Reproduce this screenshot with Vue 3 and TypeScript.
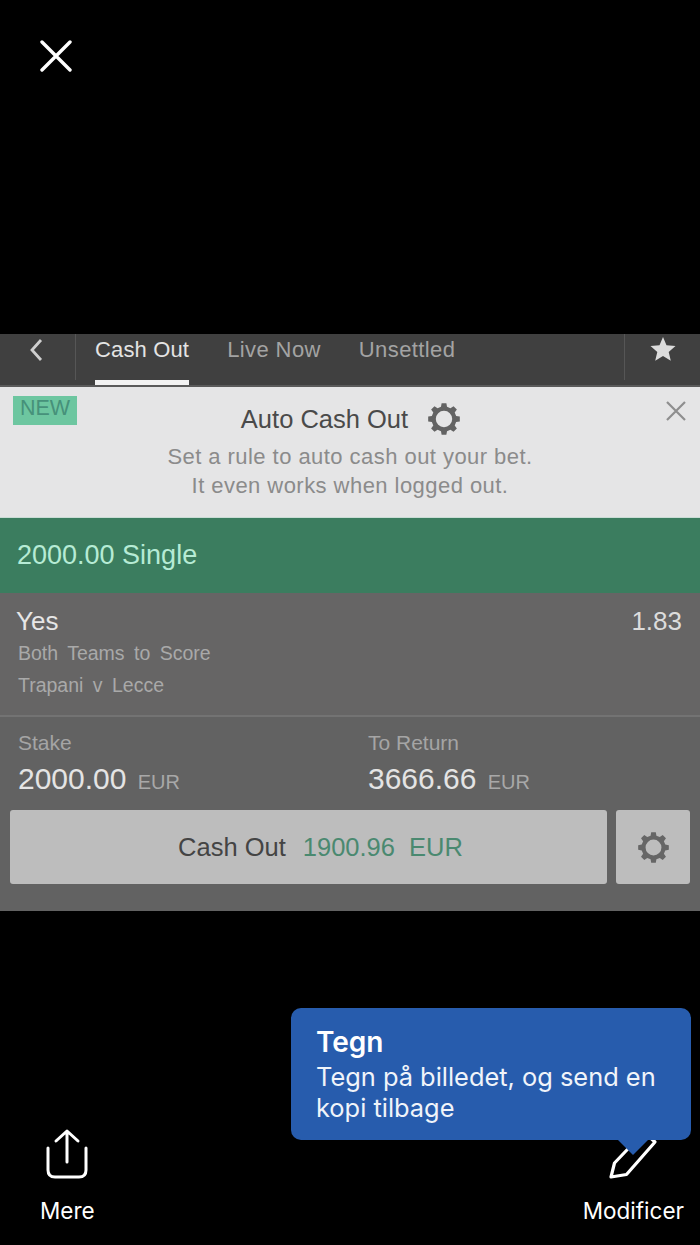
<template>
  <div class="viewer">
    <header class="top">
      <svg class="close" width="32" height="32" viewBox="0 0 32 32" fill="none">
        <path d="M2 2 L30 30 M30 2 L2 30" stroke="#fff" stroke-width="3.4" stroke-linecap="round" />
      </svg>
    </header>

    <section class="shot">
      <nav class="tabs">
        <div class="back">
          <svg width="16" height="24" viewBox="0 0 16 24" fill="none">
            <path d="M13 2 L4 12 L13 22" stroke="#cfcfcf" stroke-width="2.8" />
          </svg>
        </div>
        <div class="tab-list">
          <span
            v-for="tab in tabs"
            :key="tab.label"
            :class="['tab', { active: tab.active }]"
          >{{ tab.label }}</span>
        </div>
        <div class="fav">
          <svg width="26" height="26" viewBox="0 0 26 26">
            <path d="M13 1 L16.5 9.2 L25.5 10 L18.7 15.9 L20.8 24.7 L13 20 L5.2 24.7 L7.3 15.9 L.5 10 L9.5 9.2 Z" fill="#dcdcdc" />
          </svg>
        </div>
      </nav>

      <div class="banner">
        <span class="new">NEW</span>
        <svg class="dismiss" width="22" height="22" viewBox="0 0 22 22" fill="none">
          <path d="M2 2 L20 20 M20 2 L2 20" stroke="#8e8e8e" stroke-width="2.2" />
        </svg>
        <div class="banner-title">
          Auto Cash Out
          <svg class="gear" width="32" height="32" viewBox="0 0 32 32">
            <path :d="gearPath" fill="#636363" fill-rule="evenodd" />
          </svg>
        </div>
        <p class="banner-text">Set a rule to auto cash out your bet.<br />It even works when logged out.</p>
      </div>

      <div class="bet-head">2000.00 Single</div>

      <div class="selection">
        <div class="selection-info">
          <div class="pick">Yes</div>
          <div class="sub">Both Teams to Score</div>
          <div class="sub">Trapani v Lecce</div>
        </div>
        <div class="odds">1.83</div>
      </div>

      <div class="stakes">
        <div class="amounts">
          <div v-for="item in amounts" :key="item.label" class="amount">
            <div class="amount-label">{{ item.label }}</div>
            <div class="amount-value">{{ item.value }} <small>EUR</small></div>
          </div>
        </div>
        <div class="actions">
          <div class="cash-btn">
            <span>Cash Out</span>
            <span class="cash-value">1900.96&nbsp; EUR</span>
          </div>
          <div class="gear-btn">
            <svg width="31" height="31" viewBox="0 0 32 32">
              <path :d="gearPath" fill="#666" fill-rule="evenodd" />
            </svg>
          </div>
        </div>
      </div>
    </section>

    <footer class="bottom">
      <div class="tip">
        <strong>Tegn</strong>
        <p>Tegn på billedet, og send en kopi tilbage</p>
        <i class="tip-arrow"></i>
      </div>
      <div class="bar">
        <div class="bar-item">
          <svg width="44" height="52" viewBox="0 0 44 52" fill="none">
            <path d="M22 3 V34 M11 13 L22 3 L33 13" stroke="#fff" stroke-width="3" stroke-linecap="round" stroke-linejoin="round" />
            <path d="M3 20 V42 Q3 49 10 49 H34 Q41 49 41 42 V20" stroke="#fff" stroke-width="3" stroke-linecap="round" />
          </svg>
          <span>Mere</span>
        </div>
        <div class="bar-item">
          <svg width="50" height="52" viewBox="0 0 50 52" fill="none">
            <path d="M3 49 L6.5 35 L36 4 L47 14 L18.5 46.5 Z" stroke="#fff" stroke-width="3.2" stroke-linejoin="round" />
          </svg>
          <span>Modificer</span>
        </div>
      </div>
    </footer>
  </div>
</template>

<script setup lang="ts">
const tabs = [
  { label: 'Cash Out', active: true },
  { label: 'Live Now', active: false },
  { label: 'Unsettled', active: false },
]

const amounts = [
  { label: 'Stake', value: '2000.00' },
  { label: 'To Return', value: '3666.66' },
]

// cog with 8 short teeth and a wide round hole, centred in a 32 box
const buildGear = (): string => {
  const pts: string[] = []
  const teeth = 8
  for (let i = 0; i < teeth; i++) {
    const a = (i / teeth) * Math.PI * 2
    const step = Math.PI / teeth
    const corners: [number, number][] = [
      [12.5, a - step * 0.62],
      [16, a - step * 0.38],
      [16, a + step * 0.38],
      [12.5, a + step * 0.62],
    ]
    for (const [r, t] of corners) {
      pts.push(`${(16 + r * Math.sin(t)).toFixed(2)} ${(16 - r * Math.cos(t)).toFixed(2)}`)
    }
  }
  const ring = 'M' + pts.join(' L') + ' Z'
  const hole = 'M16 7.8 A8.2 8.2 0 1 0 16 24.2 A8.2 8.2 0 1 0 16 7.8 Z'
  return ring + ' ' + hole
}

const gearPath = buildGear()
</script>

<style>
html,
body {
  margin: 0;
  background: #000;
}
</style>

<style scoped>
.viewer {
  width: 700px;
  height: 1245px;
  background: #000;
  display: flex;
  flex-direction: column;
  overflow: hidden;
  font-family: "Liberation Sans", Arial, sans-serif;
}

.top {
  height: 334px;
  padding: 40px 0 0 40px;
  box-sizing: border-box;
  flex: none;
}

.close {
  display: block;
}

.shot {
  height: 577px;
  flex: none;
  display: flex;
  flex-direction: column;
}

.tabs {
  height: 53px;
  flex: none;
  background: #404040;
  display: flex;
  border-bottom: 2px solid #5a5a5a;
  box-sizing: border-box;
}

.back {
  width: 76px;
  height: 46px;
  box-sizing: border-box;
  border-right: 1px solid #565656;
  padding: 4px 0 0 28px;
}

.tab-list {
  flex: 1;
  display: flex;
  gap: 38px;
  padding-left: 19px;
}

.tab {
  font-size: 22px;
  line-height: 30px;
  padding-top: 1px;
  height: 51px;
  box-sizing: border-box;
  color: #a3a3a3;
  letter-spacing: 0.4px;
}

.tab.active {
  color: #e4e4e4;
  letter-spacing: 0.15px;
  border-bottom: 5px solid #f2f2f2;
}

.fav {
  width: 76px;
  height: 46px;
  box-sizing: border-box;
  border-left: 1px solid #565656;
  padding: 2px 0 0 25px;
}

.banner {
  height: 131px;
  flex: none;
  background: #e5e5e6;
  box-sizing: border-box;
  position: relative;
  text-align: center;
  padding-top: 15px;
  border-bottom: 1px solid #c9dcd5;
}

.new {
  position: absolute;
  left: 13px;
  top: 9px;
  width: 64px;
  height: 29px;
  background: #6dc6a0;
  color: #46917a;
  font-size: 21.5px;
  line-height: 25px;
}

.dismiss {
  position: absolute;
  left: 665px;
  top: 13px;
}

.banner-title {
  display: flex;
  justify-content: center;
  align-items: center;
  gap: 20px;
  height: 34px;
  font-size: 25.5px;
  color: #4a4a4a;
  padding-left: 1px;
}

.gear {
  display: block;
}

.banner-text {
  margin: 6px 0 0;
  font-size: 22px;
  line-height: 29px;
  color: #8b8b8b;
  letter-spacing: 0.45px;
}

.bet-head {
  height: 75px;
  flex: none;
  background: #3b7d5f;
  box-sizing: border-box;
  padding: 20px 0 0 17px;
  font-size: 27px;
  line-height: 34px;
  color: #b6ebd5;
}

.selection {
  height: 122px;
  flex: none;
  box-sizing: border-box;
  background: #666565;
  padding: 12px 18px 0 16px;
  display: flex;
  justify-content: space-between;
}

.pick {
  font-size: 26px;
  line-height: 32px;
  color: #e6e6e6;
}

.sub {
  font-size: 19.5px;
  line-height: 32px;
  padding-left: 2px;
  color: #a9a9a9;
  word-spacing: 4px;
}

.odds {
  font-size: 26px;
  line-height: 32px;
  color: #dcdcdc;
}

.stakes {
  flex: 1;
  background: #626262;
  border-top: 2px solid #737373;
  padding: 14px 10px 0;
  box-sizing: border-box;
}

.amounts {
  display: flex;
  padding-left: 8px;
}

.amount {
  flex: none;
  width: 350px;
}

.amount-label {
  font-size: 21px;
  line-height: 24px;
  color: #a5a5a5;
}

.amount-value {
  font-size: 30px;
  line-height: 40px;
  margin-top: 4px;
  color: #e4e4e4;
}

.amount-value small {
  font-size: 20px;
  color: #a8a8a8;
  margin-left: 3px;
}

.actions {
  display: flex;
  gap: 9px;
  margin-top: 8px;
}

.cash-btn {
  width: 597px;
  height: 74px;
  background: #bdbdbd;
  border-radius: 3px;
  display: flex;
  justify-content: center;
  align-items: center;
  gap: 17px;
  font-size: 25.5px;
  color: #444;
  box-sizing: border-box;
  padding-left: 24px;
}

.cash-value {
  color: #4a8970;
}

.gear-btn {
  width: 74px;
  height: 74px;
  background: #bdbdbd;
  border-radius: 3px;
  display: flex;
  align-items: center;
  justify-content: center;
}

.bottom {
  flex: 1;
  position: relative;
  display: flex;
  flex-direction: column;
  justify-content: flex-end;
  font-family: Inter, "Liberation Sans", sans-serif;
}

.tip {
  position: absolute;
  left: 291px;
  top: 97px;
  width: 400px;
  height: 132px;
  box-sizing: border-box;
  background: #275cad;
  border-radius: 10px;
  padding: 17px 25px 0;
  color: #fff;
  z-index: 1;
}

.tip strong {
  display: block;
  font-size: 28px;
  line-height: 34px;
  font-weight: 600;
}

.tip p {
  margin: 2px 0 0;
  font-size: 25.4px;
  line-height: 31px;
  color: #f0f4fa;
}

.tip-arrow {
  position: absolute;
  left: 327px;
  top: 100%;
  width: 0;
  height: 0;
  border-left: 15px solid transparent;
  border-right: 15px solid transparent;
  border-top: 15px solid #275cad;
}

.bar {
  display: flex;
  justify-content: space-between;
  padding: 0 16px 21px 40px;
}

.bar-item {
  display: flex;
  flex-direction: column;
  align-items: center;
  gap: 18px;
  font-size: 22.5px;
  line-height: 26px;
  color: #fff;
}

.bar-item svg {
  display: block;
}
</style>
